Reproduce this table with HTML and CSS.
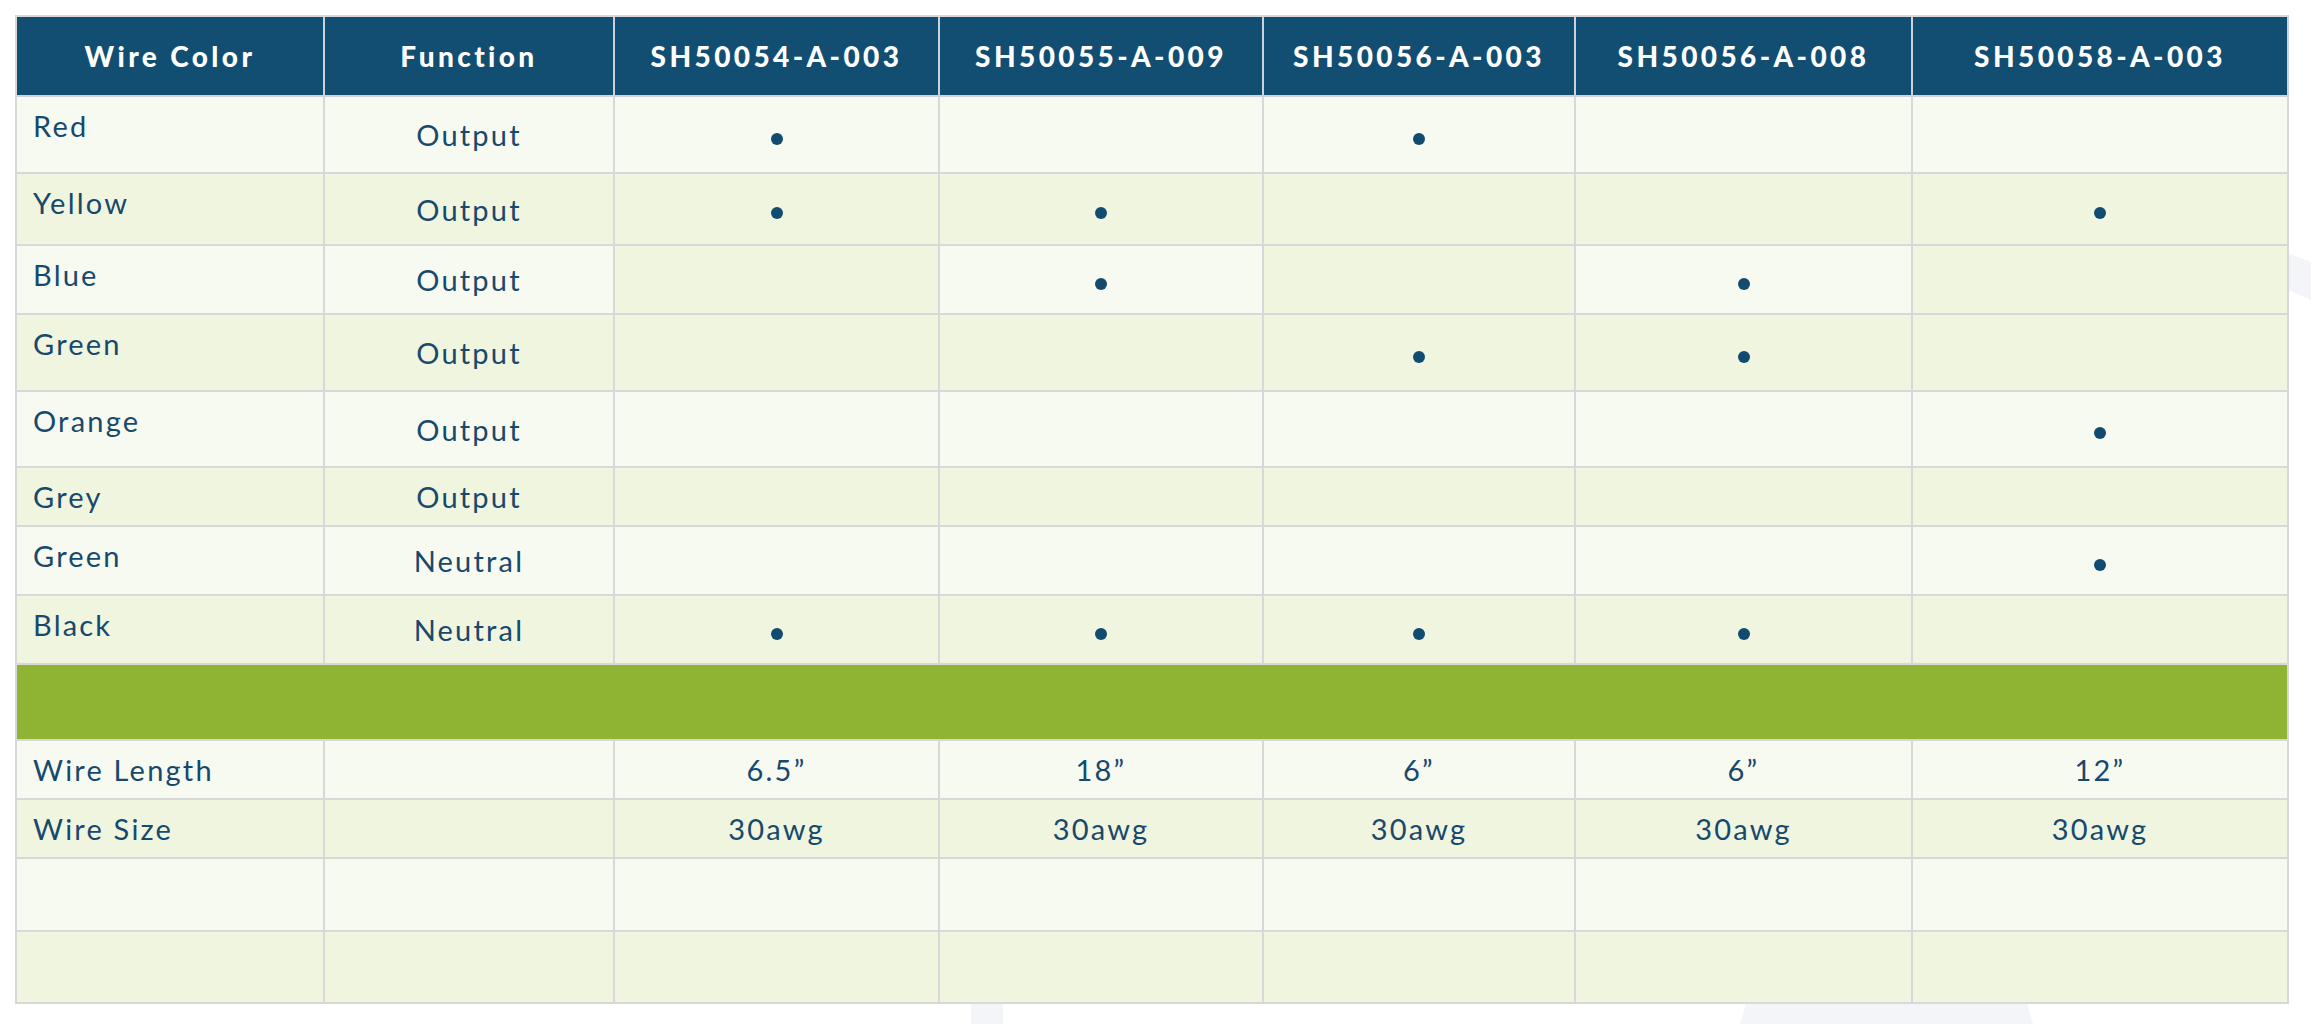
FILE: index.html
```html
<!DOCTYPE html>
<html lang="en">
<head>
    <meta charset="UTF-8">
    <meta name="viewport" content="width=device-width, initial-scale=1.0">
    <title>Wire Harness Options</title>
    <link rel="stylesheet" href="styles.css">
</head>
<body>
    <!-- faint logo watermark behind the table -->
    <svg class="watermark" width="2311" height="1024" viewBox="0 0 2311 1024">
        <polygon points="1747,1000 2026,1000 2033,1024 1740,1024" />
        <rect x="971" y="1000" width="32" height="24" />
        <polygon points="2280,250 2311,262 2311,300 2280,286" />
    </svg>

    <div class="wrap">
        <table class="spec-table">
            <colgroup>
                <col class="col-color">
                <col class="col-func">
                <col class="col-a">
                <col class="col-b">
                <col class="col-c">
                <col class="col-d">
                <col class="col-e">
            </colgroup>
            <thead>
                <tr>
                    <th>Wire Color</th>
                    <th>Function</th>
                    <th>SH50054-A-003</th>
                    <th>SH50055-A-009</th>
                    <th>SH50056-A-003</th>
                    <th>SH50056-A-008</th>
                    <th>SH50058-A-003</th>
                </tr>
            </thead>
            <tbody>
                <tr class="light h77">
                    <td class="name">Red</td><td>Output</td>
                    <td><span class="dot"></span></td><td></td><td><span class="dot"></span></td><td></td><td></td>
                </tr>
                <tr class="dark h72">
                    <td class="name">Yellow</td><td>Output</td>
                    <td><span class="dot"></span></td><td><span class="dot"></span></td><td></td><td></td><td><span class="dot"></span></td>
                </tr>
                <tr class="light h69">
                    <td class="name">Blue</td><td>Output</td>
                    <td class="shade"></td><td><span class="dot"></span></td><td class="shade"></td><td><span class="dot"></span></td><td class="shade"></td>
                </tr>
                <tr class="dark h77">
                    <td class="name">Green</td><td>Output</td>
                    <td></td><td></td><td><span class="dot"></span></td><td><span class="dot"></span></td><td></td>
                </tr>
                <tr class="light h76">
                    <td class="name">Orange</td><td>Output</td>
                    <td></td><td></td><td></td><td></td><td><span class="dot"></span></td>
                </tr>
                <tr class="dark h59">
                    <td class="name">Grey</td><td>Output</td>
                    <td></td><td></td><td></td><td></td><td></td>
                </tr>
                <tr class="light h69">
                    <td class="name">Green</td><td>Neutral</td>
                    <td></td><td></td><td></td><td></td><td><span class="dot"></span></td>
                </tr>
                <tr class="dark h69">
                    <td class="name">Black</td><td>Neutral</td>
                    <td><span class="dot"></span></td><td><span class="dot"></span></td><td><span class="dot"></span></td><td><span class="dot"></span></td><td></td>
                </tr>
                <tr class="band h76">
                    <td colspan="7"></td>
                </tr>
                <tr class="light h59">
                    <td class="name">Wire Length</td><td></td>
                    <td>6.5&rdquo;</td><td>18&rdquo;</td><td>6&rdquo;</td><td>6&rdquo;</td><td>12&rdquo;</td>
                </tr>
                <tr class="dark h59">
                    <td class="name">Wire Size</td><td></td>
                    <td>30awg</td><td>30awg</td><td>30awg</td><td>30awg</td><td>30awg</td>
                </tr>
                <tr class="light h73">
                    <td class="name"></td><td></td><td></td><td></td><td></td><td></td><td></td>
                </tr>
                <tr class="dark h72">
                    <td class="name"></td><td></td><td></td><td></td><td></td><td></td><td></td>
                </tr>
            </tbody>
        </table>
    </div>
</body>
</html>
```

FILE: styles.css
```css
body {
    margin: 0;
    background-color: #fff;
    font-family: Lato, "Open Sans", Arial, sans-serif;
    position: relative;
    height: 1024px;
    overflow: hidden;
}
.watermark {
    position: absolute;
    left: 0;
    top: 0;
    fill: #f4f5f8;
    z-index: 0;
}
.wrap {
    position: relative;
    z-index: 1;
    padding: 15px 0 0 15px;
}
.spec-table {
    table-layout: fixed;
    width: 2274px;
    border-collapse: separate;
    border-spacing: 0;
    border-top: 2px solid #d8d8d8;
    border-left: 2px solid #d8d8d8;
    color: #17496d;
}
.col-color { width: 308px; }
.col-func { width: 290px; }
.col-a { width: 325px; }
.col-b { width: 324px; }
.col-c { width: 312px; }
.col-d { width: 337px; }
.col-e { width: 376px; }

th, td {
    border-right: 2px solid #d8d8d8;
    border-bottom: 2px solid #d8d8d8;
    padding: 0;
    text-align: center;
    vertical-align: middle;
}
thead tr {
    height: 80px;
}
th {
    background-color: #124d72;
    color: #fff;
    font-size: 28px;
    font-weight: 900;
    letter-spacing: 3.4px;
    border-right-color: #c9d3db;
    border-bottom-color: #cfd4d8;
}
td {
    font-size: 29px;
    font-weight: 400;
    letter-spacing: 2.2px;
}
td.name {
    text-align: left;
    vertical-align: top;
    padding: 11px 0 0 16px;
}
.light td {
    background-color: #f7faf1;
}
.dark td,
.light td.shade {
    background-color: #f0f5e0;
}
.band td {
    background-color: #8fb434;
}
.dot {
    display: inline-block;
    width: 12px;
    height: 12px;
    border-radius: 50%;
    background-color: #124b70;
    vertical-align: middle;
}

.h59 { height: 59px; }
.h69 { height: 69px; }
.h72 { height: 72px; }
.h73 { height: 73px; }
.h76 { height: 76px; }
.h77 { height: 77px; }
```
